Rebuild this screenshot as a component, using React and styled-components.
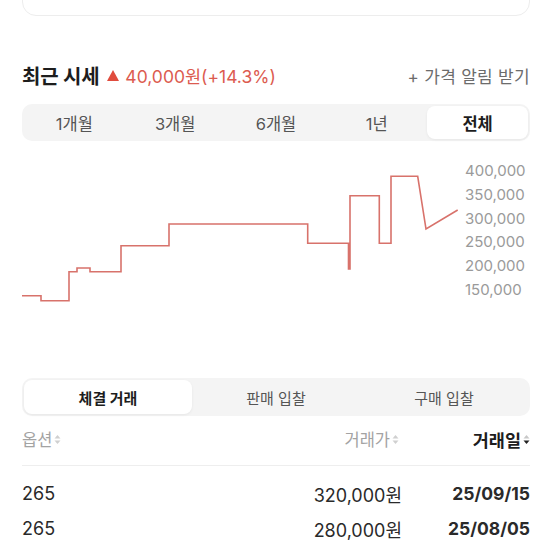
import React from "react";
import styled, { createGlobalStyle } from "styled-components";

const GlobalStyle = createGlobalStyle`
  body {
    margin: 0;
    background: #fff;
    font-family: Inter, "Noto Sans CJK KR", sans-serif;
    color: #222;
  }
`;

const Page = styled.div`
  padding: 0 22px;
  overflow: hidden;
  height: 552px;
`;

const TopCard = styled.div`
  margin-top: -30px;
  height: 44px;
  border: 1px solid #ededed;
  border-radius: 14px;
`;

const Header = styled.div`
  margin-top: 44px;
  height: 30px;
  display: flex;
  align-items: center;
  justify-content: space-between;
`;

const Title = styled.div`
  display: flex;
  align-items: center;
  gap: 8px;
`;

const TitleText = styled.span`
  font-size: 20px;
  font-weight: 700;
  color: #1d1d1d;
  letter-spacing: -0.2px;
`;

const Change = styled.span`
  display: flex;
  align-items: center;
  gap: 6px;
  font-size: 17.5px;
  color: #dc5b50;
`;

const Triangle = styled.span`
  width: 0;
  height: 0;
  border-left: 6px solid transparent;
  border-right: 6px solid transparent;
  border-bottom: 11px solid #e04c3e;
`;

const AlertLink = styled.span`
  font-size: 17px;
  letter-spacing: 0.3px;
  color: #6c6c6c;
`;

const Segmented = styled.div`
  margin-top: ${(p) => p.$top}px;
  height: ${(p) => p.$height}px;
  box-sizing: border-box;
  padding: 2px 2px;
  background: #f4f4f4;
  border-radius: 10px;
  display: grid;
  grid-template-columns: repeat(${(p) => p.$count}, 1fr);
`;

const Segment = styled.div`
  display: flex;
  align-items: center;
  justify-content: center;
  border-radius: 8px;
  font-size: ${(p) => p.$size}px;
  color: ${(p) => (p.$active ? "#1d1d1d" : "#555")};
  font-weight: ${(p) => (p.$active ? 700 : 400)};
  background: ${(p) => (p.$active ? "#fff" : "transparent")};
  box-shadow: ${(p) => (p.$active ? "0 1px 3px rgba(0,0,0,0.06)" : "none")};
`;

const ChartRow = styled.div`
  margin-top: 18px;
  height: 160px;
  display: flex;
`;

const ChartSvg = styled.svg`
  width: 438px;
  height: 160px;
  flex: none;
`;

const Axis = styled.div`
  margin-left: 5px;
  display: flex;
  flex-direction: column;
`;

const AxisLabel = styled.span`
  font-size: 15px;
  line-height: 23.8px;
  color: #9a9a9a;
`;

const TableHead = styled.div`
  margin-top: 10px;
  padding-bottom: 13px;
  border-bottom: 1px solid #eeeeee;
  display: grid;
  grid-template-columns: 1fr 160px 128px;
  align-items: center;
  height: 26px;
`;

const HeadCell = styled.div`
  display: flex;
  align-items: center;
  justify-content: ${(p) => (p.$right ? "flex-end" : "flex-start")};
  gap: 2px;
  padding-right: ${(p) => (p.$inset ? 3 : 0)}px;
  font-size: ${(p) => (p.$active ? 17.5 : 16.5)}px;
  font-weight: ${(p) => (p.$active ? 700 : 400)};
  color: ${(p) => (p.$active ? "#1d1d1d" : "#a3a3a3")};
`;

const Rows = styled.div`
  margin-top: 10px;
`;

const Row = styled.div`
  display: grid;
  grid-template-columns: 1fr 160px 128px;
  align-items: center;
  height: 35px;
  font-size: 18px;
`;

const Cell = styled.div`
  text-align: ${(p) => (p.$right ? "right" : "left")};
  font-weight: ${(p) => (p.$bold ? 700 : 400)};
  font-size: ${(p) => (p.$bold ? 17.5 : 18)}px;
  color: #2a2a2a;
`;

const points = [
  [0, 136.7], [19, 136.7], [19, 141.7], [47, 141.7], [47, 112.7], [55, 112.7],
  [55, 109], [68, 109], [68, 112.7], [99, 112.7], [99, 86.7], [147, 86.7],
  [147, 65], [285.7, 65], [285.7, 84.3], [326.5, 84.3], [326.5, 110], [328, 110],
  [328, 36.7], [357.3, 36.7], [357.3, 84.3], [369, 84.3], [369, 17.3],
  [395.7, 17.3], [404, 70], [435.7, 51],
];

function SortIcon({ active }) {
  return (
    <svg width="7" height="11" viewBox="0 0 7 11">
      <path d="M3.5 1 L6.5 4.5 L0.5 4.5 Z" fill={active ? "#c8c8c8" : "#d0d0d0"} />
      <path d="M3.5 10 L6.5 6.5 L0.5 6.5 Z" fill={active ? "#222" : "#d0d0d0"} />
    </svg>
  );
}

const periods = ["1개월", "3개월", "6개월", "1년", "전체"];
const kinds = ["체결 거래", "판매 입찰", "구매 입찰"];
const axis = ["400,000", "350,000", "300,000", "250,000", "200,000", "150,000"];
const trades = [
  { size: "265", price: "320,000원", date: "25/09/15" },
  { size: "265", price: "280,000원", date: "25/08/05" },
];

export default function App() {
  return (
    <>
      <GlobalStyle />
      <Page>
        <TopCard />
        <Header>
          <Title>
            <TitleText>최근 시세</TitleText>
            <Change>
              <Triangle />
              40,000원(+14.3%)
            </Change>
          </Title>
          <AlertLink>+ 가격 알림 받기</AlertLink>
        </Header>

        <Segmented $top={14} $height={37} $count={5}>
          {periods.map((p) => (
            <Segment key={p} $size={16.5} $active={p === "전체"}>
              {p}
            </Segment>
          ))}
        </Segmented>

        <ChartRow>
          <ChartSvg viewBox="0 0 438 160">
            <polyline
              points={points.map((p) => p.join(",")).join(" ")}
              fill="none"
              stroke="#d8726b"
              strokeWidth="1.6"
            />
          </ChartSvg>
          <Axis>
            {axis.map((a) => (
              <AxisLabel key={a}>{a}</AxisLabel>
            ))}
          </Axis>
        </ChartRow>

        <Segmented $top={59} $height={38} $count={3}>
          {kinds.map((k) => (
            <Segment key={k} $size={15} $active={k === "체결 거래"}>
              {k}
            </Segment>
          ))}
        </Segmented>

        <TableHead>
          <HeadCell>
            옵션
            <SortIcon />
          </HeadCell>
          <HeadCell $right $inset>
            거래가
            <SortIcon />
          </HeadCell>
          <HeadCell $right $active>
            거래일
            <SortIcon active />
          </HeadCell>
        </TableHead>

        <Rows>
          {trades.map((t) => (
            <Row key={t.date}>
              <Cell>{t.size}</Cell>
              <Cell $right>{t.price}</Cell>
              <Cell $right $bold>
                {t.date}
              </Cell>
            </Row>
          ))}
        </Rows>
      </Page>
    </>
  );
}
